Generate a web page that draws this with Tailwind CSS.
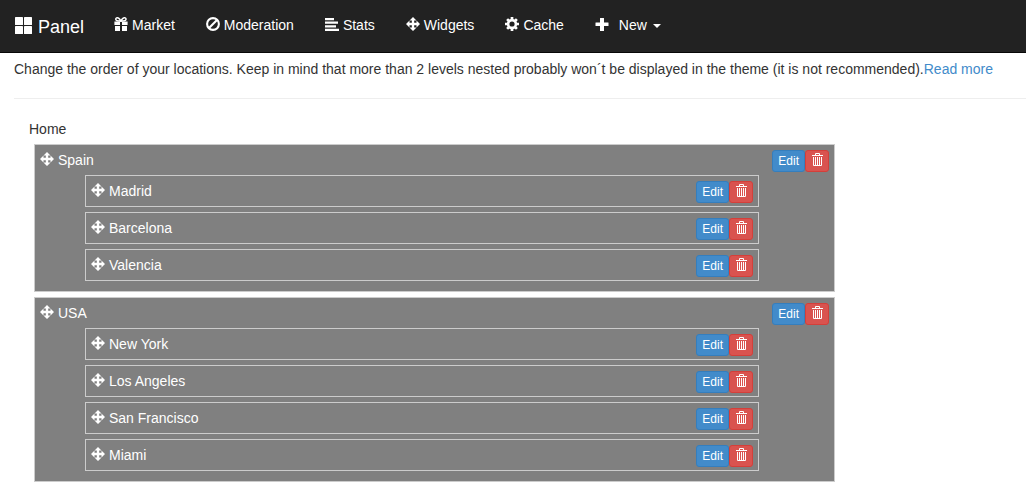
<!DOCTYPE html>
<html lang="en">
<head>
    <meta charset="UTF-8">
    <meta name="viewport" content="width=device-width, initial-scale=1.0">
    <title>Panel - Locations</title>
    <script src="https://cdn.jsdelivr.net/npm/@tailwindcss/browser@4"></script>
</head>
<body class="min-h-screen bg-white font-['Liberation_Sans',Arial,sans-serif] text-sm/5 text-[#333]">
    <!-- Icon set -->
    <svg class="hidden" aria-hidden="true">
        <symbol id="i-grid" viewBox="0 0 18 18">
            <rect x="1" y="0" width="8" height="8" rx="0.6"/><rect x="10" y="0" width="8" height="8" rx="0.6"/>
            <rect x="1" y="9" width="8" height="8" rx="0.6"/><rect x="10" y="9" width="8" height="8" rx="0.6"/>
        </symbol>
        <symbol id="i-gift" viewBox="0 0 14 14">
            <path d="M0.4 4.5h5.600v3.500H0.400zM8 4.500h5.600v3.500H8zM1 9h5v5H1zM8 9h5v5H8z"/>
            <path d="M6.900 4.200C5.800 1.600 4 .3 2.600.9 1.300 1.500 1.600 3.500 3.100 3.700L6.900 4.200C8 1.600 9.800.3 11.200.9 12.500 1.500 12.200 3.500 10.700 3.700z" fill="none" stroke="currentColor" stroke-width="1.500"/>
        </symbol>
        <symbol id="i-ban" viewBox="0 0 14 14">
            <circle cx="7" cy="7" r="5.900" fill="none" stroke="currentColor" stroke-width="2.100"/>
            <path d="M3 11L11 3" stroke="currentColor" stroke-width="2.100"/>
        </symbol>
        <symbol id="i-align" viewBox="0 0 14 14">
            <path d="M0 1h9v2.200H0zM0 4.600h13v2.200H0zM0 8.200h11v2.200H0zM0 11.800h14v2.200H0z"/>
        </symbol>
        <symbol id="i-move" viewBox="0 0 1200 1200">
            <path d="M600 0l300 300H700v200h200V300l300 300-300 300V700H700v200h200l-300 300-300-300h200V700H300v200L0 600l300-300v200h200V300H300z"/>
        </symbol>
        <symbol id="i-cog" viewBox="0 0 14 14">
            <circle cx="7" cy="7" r="3.900" fill="none" stroke="currentColor" stroke-width="2.600"/>
            <path d="M7 0v2.500M7 11.500V14M0 7h2.500M11.500 7H14M2.100 2.100l1.700 1.700M10.200 10.200l1.700 1.700M2.100 11.900l1.700-1.700M10.200 3.800l1.700-1.700" stroke="currentColor" stroke-width="2.700"/>
        </symbol>
        <symbol id="i-plus" viewBox="0 0 14 14">
            <path d="M5.300 1h3.400q.3 0 .3.300V5.500h4.200q.3 0 .3.300v2.900q0 .3-.3.300H9v4.700q0 .3-.3.300H5.300q-.3 0-.3-.3V9H.8q-.3 0-.3-.3V5.800q0-.3.300-.3H5V1.300q0-.3.300-.3z"/>
        </symbol>
        <symbol id="i-trash" viewBox="0 0 12 14">
            <path d="M1 2.500h11M4.500 2.500v-2h4v2M2.500 4v8.500h8V4M4.500 4v8M6.500 4v8M8.500 4v8" fill="none" stroke="currentColor"/>
        </symbol>
    </svg>

    <!-- Navbar -->
    <nav class="flex border-b border-[#080808] bg-[#222] pb-[15px] pl-3.5 text-white">
        <a href="#" class="flex gap-1.5 pr-[15px] pt-[17px] text-lg/5"><svg class="size-[18px] fill-current"><use href="#i-grid"/></svg>Panel</a>
        <a href="#" class="flex gap-1 pl-[15px] pr-4 pt-[15px]"><svg class="mt-0.5 size-3.5 fill-current"><use href="#i-gift"/></svg>Market</a>
        <a href="#" class="flex gap-1 pl-[15px] pr-4 pt-[15px]"><svg class="mt-0.5 size-3.5 fill-current"><use href="#i-ban"/></svg>Moderation</a>
        <a href="#" class="flex gap-1 pl-[15px] pr-4 pt-[15px]"><svg class="mt-0.5 size-3.5 fill-current"><use href="#i-align"/></svg>Stats</a>
        <a href="#" class="flex gap-1 pl-[15px] pr-4 pt-[15px]"><svg class="mt-0.5 size-3.5 fill-current"><use href="#i-move"/></svg>Widgets</a>
        <a href="#" class="flex gap-1 pl-[15px] pr-4 pt-[15px]"><svg class="mt-0.5 size-3.5 fill-current"><use href="#i-cog"/></svg>Cache</a>
        <button type="button" class="flex pl-[15px] pr-4 pt-[15px]"><svg class="mr-2.5 mt-0.5 size-3.5 fill-current"><use href="#i-plus"/></svg>New<span class="ml-1.5 mt-[9px] border-x-4 border-t-4 border-x-transparent border-t-white"></span></button>
    </nav>

    <main class="pl-3.5">
        <p class="pt-1.5">Change the order of your locations. Keep in mind that more than 2 levels nested probably won´t be displayed in the theme (it is not recommended).<a href="#" class="text-[#428bca]">Read more</a></p>
        <hr class="mb-5 mt-[19px] border-[#eee]">

        <!-- Location tree -->
        <section class="px-[15px]">
            <h1>Home</h1>
            <ul class="ml-[5px] mt-[5px] max-w-[801px] space-y-[5px] text-white">
                <li class="border border-[#ccc] bg-[#808080] p-[5px]">
                    <div class="flex h-5 items-start">
                        <svg class="mr-1 mt-0.5 size-3.5 fill-current"><use href="#i-move"/></svg><span class="flex-1">Spain</span>
                        <button type="button" class="h-[22px] rounded-[3px] border border-[#357ebd] bg-[#428bca] px-[5px] text-xs/5">Edit</button>
                        <button type="button" aria-label="Delete Spain" class="h-[22px] rounded-[3px] border border-[#d43f3a] bg-[#d9534f] px-[5px]"><svg class="mb-0.5 h-3.5 w-3 fill-current"><use href="#i-trash"/></svg></button>
                    </div>
                    <ul class="mb-[5px] ml-[45px] mr-[70px] mt-[5px] space-y-[5px]">
                        <li class="flex h-8 items-start border border-[#ccc] p-[5px]">
                            <svg class="mr-1 mt-0.5 size-3.5 fill-current"><use href="#i-move"/></svg><span class="flex-1">Madrid</span>
                            <button type="button" class="h-[22px] rounded-[3px] border border-[#357ebd] bg-[#428bca] px-[5px] text-xs/5">Edit</button>
                            <button type="button" aria-label="Delete Madrid" class="h-[22px] rounded-[3px] border border-[#d43f3a] bg-[#d9534f] px-[5px]"><svg class="mb-0.5 h-3.5 w-3 fill-current"><use href="#i-trash"/></svg></button>
                        </li>
                        <li class="flex h-8 items-start border border-[#ccc] p-[5px]">
                            <svg class="mr-1 mt-0.5 size-3.5 fill-current"><use href="#i-move"/></svg><span class="flex-1">Barcelona</span>
                            <button type="button" class="h-[22px] rounded-[3px] border border-[#357ebd] bg-[#428bca] px-[5px] text-xs/5">Edit</button>
                            <button type="button" aria-label="Delete Barcelona" class="h-[22px] rounded-[3px] border border-[#d43f3a] bg-[#d9534f] px-[5px]"><svg class="mb-0.5 h-3.5 w-3 fill-current"><use href="#i-trash"/></svg></button>
                        </li>
                        <li class="flex h-8 items-start border border-[#ccc] p-[5px]">
                            <svg class="mr-1 mt-0.5 size-3.5 fill-current"><use href="#i-move"/></svg><span class="flex-1">Valencia</span>
                            <button type="button" class="h-[22px] rounded-[3px] border border-[#357ebd] bg-[#428bca] px-[5px] text-xs/5">Edit</button>
                            <button type="button" aria-label="Delete Valencia" class="h-[22px] rounded-[3px] border border-[#d43f3a] bg-[#d9534f] px-[5px]"><svg class="mb-0.5 h-3.5 w-3 fill-current"><use href="#i-trash"/></svg></button>
                        </li>
                    </ul>
                </li>
                <li class="border border-[#ccc] bg-[#808080] p-[5px]">
                    <div class="flex h-5 items-start">
                        <svg class="mr-1 mt-0.5 size-3.5 fill-current"><use href="#i-move"/></svg><span class="flex-1">USA</span>
                        <button type="button" class="h-[22px] rounded-[3px] border border-[#357ebd] bg-[#428bca] px-[5px] text-xs/5">Edit</button>
                        <button type="button" aria-label="Delete USA" class="h-[22px] rounded-[3px] border border-[#d43f3a] bg-[#d9534f] px-[5px]"><svg class="mb-0.5 h-3.5 w-3 fill-current"><use href="#i-trash"/></svg></button>
                    </div>
                    <ul class="mb-[5px] ml-[45px] mr-[70px] mt-[5px] space-y-[5px]">
                        <li class="flex h-8 items-start border border-[#ccc] p-[5px]">
                            <svg class="mr-1 mt-0.5 size-3.5 fill-current"><use href="#i-move"/></svg><span class="flex-1">New York</span>
                            <button type="button" class="h-[22px] rounded-[3px] border border-[#357ebd] bg-[#428bca] px-[5px] text-xs/5">Edit</button>
                            <button type="button" aria-label="Delete New York" class="h-[22px] rounded-[3px] border border-[#d43f3a] bg-[#d9534f] px-[5px]"><svg class="mb-0.5 h-3.5 w-3 fill-current"><use href="#i-trash"/></svg></button>
                        </li>
                        <li class="flex h-8 items-start border border-[#ccc] p-[5px]">
                            <svg class="mr-1 mt-0.5 size-3.5 fill-current"><use href="#i-move"/></svg><span class="flex-1">Los Angeles</span>
                            <button type="button" class="h-[22px] rounded-[3px] border border-[#357ebd] bg-[#428bca] px-[5px] text-xs/5">Edit</button>
                            <button type="button" aria-label="Delete Los Angeles" class="h-[22px] rounded-[3px] border border-[#d43f3a] bg-[#d9534f] px-[5px]"><svg class="mb-0.5 h-3.5 w-3 fill-current"><use href="#i-trash"/></svg></button>
                        </li>
                        <li class="flex h-8 items-start border border-[#ccc] p-[5px]">
                            <svg class="mr-1 mt-0.5 size-3.5 fill-current"><use href="#i-move"/></svg><span class="flex-1">San Francisco</span>
                            <button type="button" class="h-[22px] rounded-[3px] border border-[#357ebd] bg-[#428bca] px-[5px] text-xs/5">Edit</button>
                            <button type="button" aria-label="Delete San Francisco" class="h-[22px] rounded-[3px] border border-[#d43f3a] bg-[#d9534f] px-[5px]"><svg class="mb-0.5 h-3.5 w-3 fill-current"><use href="#i-trash"/></svg></button>
                        </li>
                        <li class="flex h-8 items-start border border-[#ccc] p-[5px]">
                            <svg class="mr-1 mt-0.5 size-3.5 fill-current"><use href="#i-move"/></svg><span class="flex-1">Miami</span>
                            <button type="button" class="h-[22px] rounded-[3px] border border-[#357ebd] bg-[#428bca] px-[5px] text-xs/5">Edit</button>
                            <button type="button" aria-label="Delete Miami" class="h-[22px] rounded-[3px] border border-[#d43f3a] bg-[#d9534f] px-[5px]"><svg class="mb-0.5 h-3.5 w-3 fill-current"><use href="#i-trash"/></svg></button>
                        </li>
                    </ul>
                </li>
            </ul>
        </section>
    </main>
</body>
</html>
